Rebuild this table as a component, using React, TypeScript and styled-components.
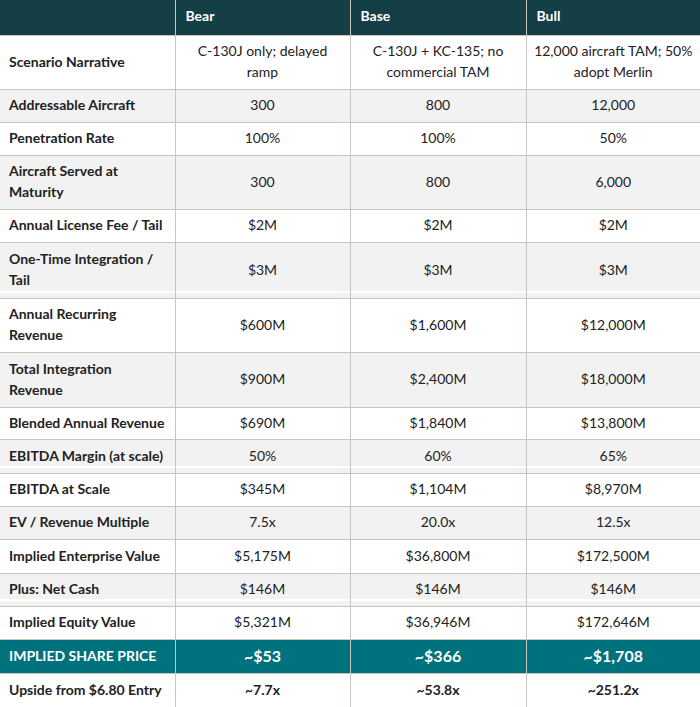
import { createGlobalStyle } from "styled-components";
import styled from "styled-components";

const GlobalStyle = createGlobalStyle`
  html, body {
    margin: 0;
    padding: 0;
    background: #ffffff;
  }
  body {
    font-family: Lato, "Liberation Sans", sans-serif;
    color: #222222;
  }
`;

const Table = styled.table`
  width: 700px;
  border-collapse: collapse;
  table-layout: fixed;
  font-size: 14px;
  line-height: 21px;
`;

type RowKind = "head" | "white" | "gray" | "accent";

const rowBg: Record<RowKind, string> = {
  head: "#143f46",
  white: "#ffffff",
  gray: "#f2f2f2",
  accent: "#00727d",
};

const Row = styled.tr<{ $kind: RowKind; $h: number; $seam?: boolean }>`
  height: ${({ $h }) => $h}px;
  background: ${({ $kind, $seam }) =>
    $seam
      ? `linear-gradient(to bottom, ${rowBg.gray} 0, ${rowBg.gray} calc(100% - 7px), #ffffff calc(100% - 7px), #ffffff calc(100% - 5px), ${rowBg.gray} calc(100% - 5px))`
      : rowBg[$kind]};
  color: ${({ $kind }) => ($kind === "head" || $kind === "accent" ? "#ffffff" : "#222222")};
`;

const HeadCell = styled.th`
  text-align: left;
  font-weight: 700;
  padding: 0 10px 3px;
  border-left: 1px solid #c9c5bd;
  vertical-align: middle;
  &:first-child {
    border-left: none;
  }
`;

const LabelCell = styled.td`
  text-align: left;
  font-weight: 700;
  padding: 0 9px 2px;
  border-top: 1px solid #c9c5bd;
  vertical-align: middle;
`;

const ValueCell = styled.td<{ $bold?: boolean; $big?: boolean }>`
  text-align: center;
  font-weight: ${({ $bold }) => ($bold ? 700 : 400)};
  font-size: ${({ $big }) => ($big ? "16px" : "14px")};
  white-space: pre-line;
  padding: 0 2px 2px;
  border-top: 1px solid #c9c5bd;
  border-left: 1px solid #c9c5bd;
  vertical-align: middle;
`;

type Line = {
  label: string;
  values: [string, string, string];
  h: number;
  seam?: boolean;
  kind?: RowKind;
  bold?: boolean;
  big?: boolean;
};

const lines: Line[] = [
  {
    label: "Scenario Narrative",
    values: ["C-130J only; delayed\nramp", "C-130J + KC-135; no\ncommercial TAM", "12,000 aircraft TAM; 50%\nadopt Merlin"],
    h: 54,
  },
  { label: "Addressable Aircraft", values: ["300", "800", "12,000"], h: 33 },
  { label: "Penetration Rate", values: ["100%", "100%", "50%"], h: 33 },
  { label: "Aircraft Served at Maturity", values: ["300", "800", "6,000"], h: 54 },
  { label: "Annual License Fee / Tail", values: ["$2M", "$2M", "$2M"], h: 33 },
  { label: "One-Time Integration / Tail", values: ["$3M", "$3M", "$3M"], h: 56, seam: true },
  { label: "Annual Recurring Revenue", values: ["$600M", "$1,600M", "$12,000M"], h: 54 },
  { label: "Total Integration Revenue", values: ["$900M", "$2,400M", "$18,000M"], h: 55 },
  { label: "Blended Annual Revenue", values: ["$690M", "$1,840M", "$13,800M"], h: 32 },
  { label: "EBITDA Margin (at scale)", values: ["50%", "60%", "65%"], h: 34, seam: true },
  { label: "EBITDA at Scale", values: ["$345M", "$1,104M", "$8,970M"], h: 33 },
  { label: "EV / Revenue Multiple", values: ["7.5x", "20.0x", "12.5x"], h: 33 },
  { label: "Implied Enterprise Value", values: ["$5,175M", "$36,800M", "$172,500M"], h: 34 },
  { label: "Plus: Net Cash", values: ["$146M", "$146M", "$146M"], h: 33, seam: true },
  { label: "Implied Equity Value", values: ["$5,321M", "$36,946M", "$172,646M"], h: 33 },
  { label: "IMPLIED SHARE PRICE", values: ["~$53", "~$366", "~$1,708"], h: 34, kind: "accent", bold: true, big: true },
  { label: "Upside from $6.80 Entry", values: ["~7.7x", "~53.8x", "~251.2x"], h: 34, bold: true },
];

const ScenarioTable = () => (
  <Table>
    <colgroup>
      <col style={{ width: 175 }} />
      <col style={{ width: 175 }} />
      <col style={{ width: 176 }} />
      <col style={{ width: 174 }} />
    </colgroup>
    <thead>
      <Row $kind="head" $h={35}>
        <HeadCell />
        <HeadCell>Bear</HeadCell>
        <HeadCell>Base</HeadCell>
        <HeadCell>Bull</HeadCell>
      </Row>
    </thead>
    <tbody>
      {lines.map((line, i) => {
        const kind: RowKind = line.kind ?? (i % 2 === 0 ? "white" : "gray");
        return (
          <Row key={line.label} $kind={kind} $h={line.h} $seam={line.seam}>
            <LabelCell>{line.label}</LabelCell>
            {line.values.map((v, j) => (
              <ValueCell key={j} $bold={line.bold} $big={line.big}>
                {v}
              </ValueCell>
            ))}
          </Row>
        );
      })}
    </tbody>
  </Table>
);

export default function App() {
  return (
    <>
      <GlobalStyle />
      <ScenarioTable />
    </>
  );
}
